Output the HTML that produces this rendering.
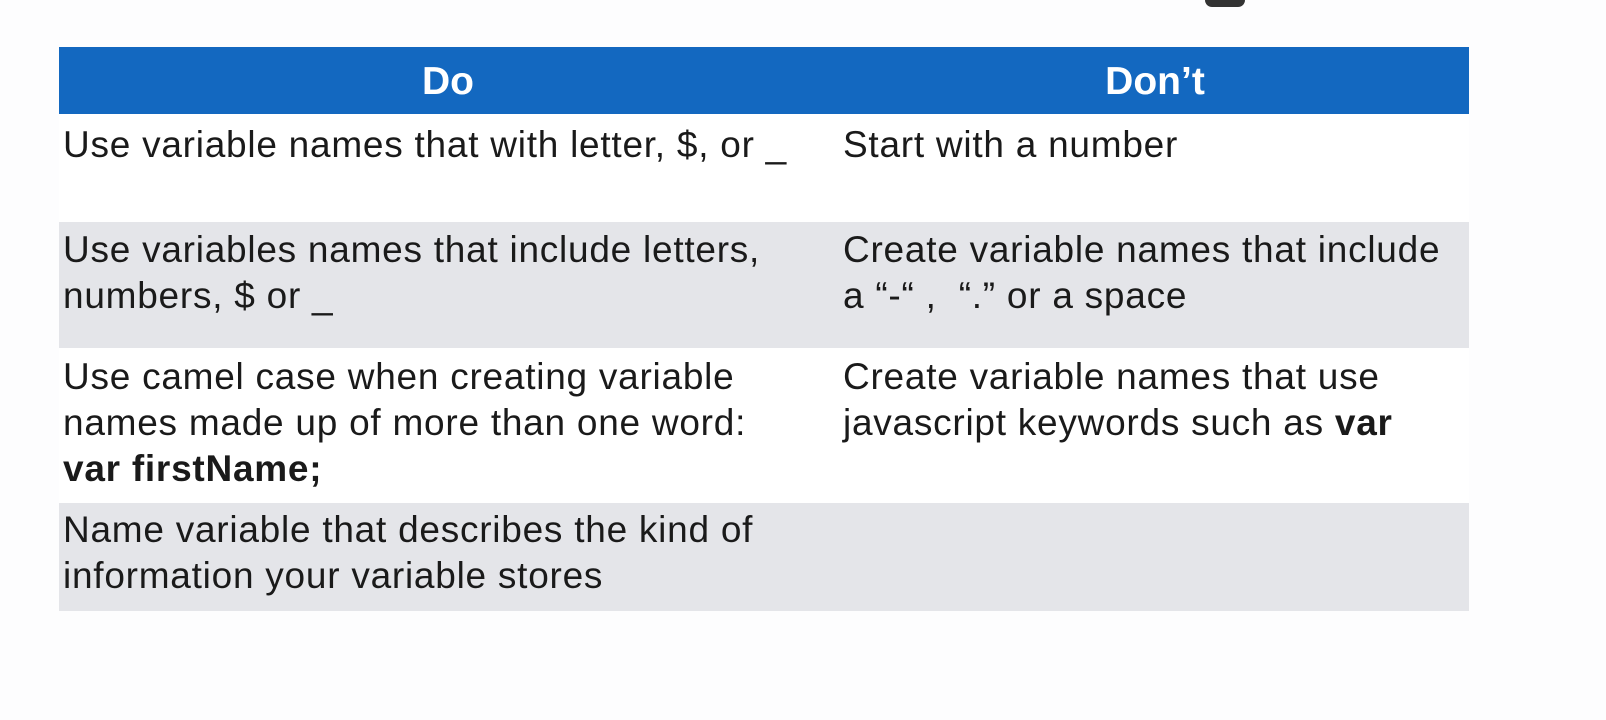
<!DOCTYPE html>
<html><head><style>
body{margin:0;width:1606px;height:720px;background:#fdfdfe;position:relative;overflow:hidden;font-family:"Liberation Sans",Arial,sans-serif;}
.b{position:absolute;left:59px;width:1410px;}
.t{position:absolute;font-size:37px;line-height:46px;color:#1a1a1a;white-space:nowrap;letter-spacing:0.75px;}
.h{position:absolute;top:59px;font-size:39px;line-height:46px;color:#fff;font-weight:bold;width:400px;text-align:center;}
</style></head><body>
<div style="position:absolute;left:1205px;top:0;width:40px;height:7px;background:#333;border-radius:0 0 20px 20px"></div>
<div class="b" style="top:47px;height:67px;background:#1368c0"></div>
<div class="b" style="top:114px;height:108px;background:#fff"></div>
<div class="b" style="top:222px;height:126px;background:#e4e5e9"></div>
<div class="b" style="top:348px;height:155px;background:#fff"></div>
<div class="b" style="top:503px;height:108px;background:#e4e5e9"></div>
<div class="h" style="left:248px">Do</div>
<div class="h" style="left:955px">Don’t</div>
<div class="t" style="left:63px;top:122px">Use variable names that with letter, $, or _</div>
<div class="t" style="left:843px;top:122px">Start with a number</div>
<div class="t" style="left:63px;top:227px">Use variables names that include letters,<br>numbers, $ or _</div>
<div class="t" style="left:843px;top:227px">Create variable names that include<br>a “-“ ,&nbsp; “.” or a space</div>
<div class="t" style="left:63px;top:354px">Use camel case when creating variable<br>names made up of more than one word:<br><b>var firstName;</b></div>
<div class="t" style="left:843px;top:354px">Create variable names that use<br>javascript keywords such as <b>var</b></div>
<div class="t" style="left:63px;top:507px">Name variable that describes the kind of<br>information your variable stores</div>
</body></html>
